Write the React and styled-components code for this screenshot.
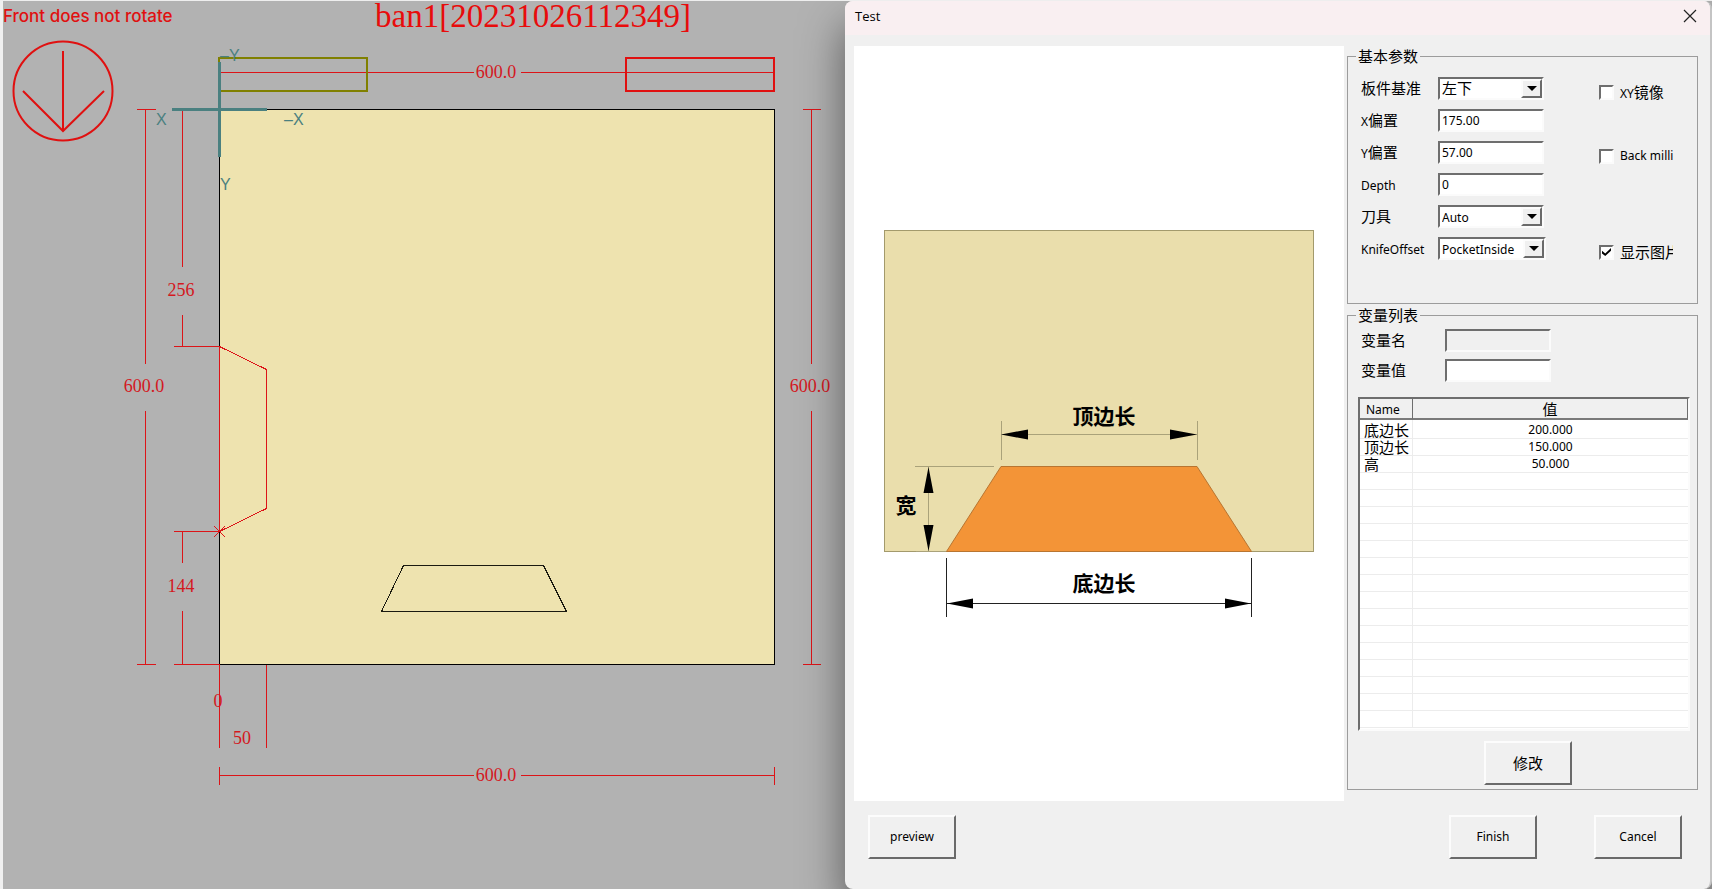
import React from "react";
import styled, { createGlobalStyle } from "styled-components";

const GlobalStyle = createGlobalStyle`
  *, *::before, *::after { box-sizing: border-box; }
  body {
    margin: 0;
    background: #b2b2b2;
    color: #000;
    font: 12px/16px "Noto Sans", "Noto Sans CJK SC", sans-serif;
  }
  button, input, select { font: inherit; color: inherit; }
`;

const Screen = styled.div`
  display: grid;
  grid-template-columns: minmax(0, 845fr) minmax(0, 867fr);
  min-height: 100vh;
  border-top: 1px solid #eeeeee;
  overflow: hidden;
`;

const Cjk = styled.span`
  font-family: "Noto Sans CJK SC", sans-serif;
  font-size: 15px;
  line-height: 20px;
`;

/* ---------- board drawing ---------- */

const Canvas = styled.main`
  border-left: 3px solid #f0f0f0;
  background: #b2b2b2;
`;

const BoardSvg = styled.svg`
  display: block;
  width: 100%;
  height: auto;
  fill: none;
  overflow: visible;
`;

const Lines = styled.g`
  stroke: ${(p) => p.$color || "#dc1418"};
  stroke-width: ${(p) => p.$weight || 1};
  shape-rendering: ${(p) => (p.$smooth ? "auto" : "crispEdges")};
`;

const DimText = styled.text`
  font: 18px "Liberation Serif", serif;
  fill: #d4181e;
`;

const BoardTitle = styled.text`
  font: 33px "Liberation Serif", serif;
  fill: #e80c0c;
`;

const Notice = styled.text`
  font: 500 17px Inter, sans-serif;
  fill: #e01010;
`;

const AxisText = styled.text`
  font: 16px "Liberation Sans", sans-serif;
  fill: #4a8080;
`;

function Board() {
  return (
    <BoardSvg viewBox="3 1 842 888" role="img" aria-label="Board drawing">
      <rect x="219.5" y="109.5" width="555" height="555" fill="#eee3af" stroke="#000" shapeRendering="crispEdges" />
      <Lines $color="#1a1a10">
        <path d="M403.5 565.5H543.5L566.5 611.5H381.5Z" />
      </Lines>

      <Lines>
        <path d="M219 72.5H474M521 72.5H774" />
        <path d="M137 109.5H156M145.5 109V364M145.5 411V664M137 664.5H156" />
        <path d="M182.5 110V267M182.5 315V346M174 346.5H219" />
        <path d="M174 531.5H219M182.5 531V563M182.5 611V664M174 664.5H219" />
        <path d="M219.5 664V748M266.5 665V748" />
        <path d="M219.5 767V785M219 775.5H474M521 775.5H774M774.5 767V785" />
        <path d="M803 109.5H821M811.5 109V364M811.5 411V664M803 664.5H821" />
        <path d="M219.5 346.5L266.5 369.5V508.5L219.5 531.5Z" />
        <path d="M214 526L225 537M225 526L214 537" />
      </Lines>

      <Lines $color="#808000" $weight={2}>
        <rect x="219" y="58" width="148" height="33" />
      </Lines>
      <Lines $color="#e01010" $weight={2}>
        <rect x="626" y="58" width="148" height="33" />
      </Lines>
      <Lines $color="#e01010" $weight={2} $smooth>
        <circle cx="63" cy="91" r="49.5" />
        <path d="M63 51V131M23 91L63 131L104 91" />
      </Lines>
      <Lines $color="#4a8080" $weight={3}>
        <path d="M172 109.5H267M219.5 62V157" />
      </Lines>

      <AxisText x="220" y="61">–Y</AxisText>
      <AxisText x="220" y="190">Y</AxisText>
      <AxisText x="156" y="125">X</AxisText>
      <AxisText x="284" y="125">–X</AxisText>

      <Notice x="3" y="22">Front does not rotate</Notice>
      <BoardTitle x="533" y="27" textAnchor="middle">ban1[20231026112349]</BoardTitle>
      <DimText x="496" y="78" textAnchor="middle">600.0</DimText>
      <DimText x="496" y="781" textAnchor="middle">600.0</DimText>
      <DimText x="144" y="392" textAnchor="middle">600.0</DimText>
      <DimText x="810" y="392" textAnchor="middle">600.0</DimText>
      <DimText x="181" y="296" textAnchor="middle">256</DimText>
      <DimText x="181" y="592" textAnchor="middle">144</DimText>
      <DimText x="218" y="707" textAnchor="middle">0</DimText>
      <DimText x="242" y="744" textAnchor="middle">50</DimText>
    </BoardSvg>
  );
}

/* ---------- dialog ---------- */

const Dialog = styled.section`
  display: flex;
  flex-direction: column;
  background: #f0f0f0;
  border-right: 2px solid #c4c4c4;
  border-radius: 8px;
  box-shadow: 0 24px 44px rgba(0, 0, 0, 0.5);
  overflow: hidden;
`;

const TitleBar = styled.header`
  display: flex;
  align-items: center;
  justify-content: space-between;
  height: 34px;
  padding: 0 10px;
  background: #f9eff1;
`;

const DialogTitle = styled.h1`
  margin: 0;
  padding-bottom: 4px;
  font: 13px/20px "Open Sans", sans-serif;
`;

const CloseButton = styled.button`
  display: flex;
  justify-content: center;
  align-items: center;
  width: 20px;
  height: 20px;
  margin: 0 0 4px;
  padding: 0;
  border: 0;
  background: none;
`;

const Body = styled.div`
  display: flex;
  flex: 1;
  gap: 3px;
  padding: 11px 12px 0 9px;
`;

const PreviewPane = styled.div`
  flex: 1;
  min-width: 0;
  background: #fff;
`;

const PreviewSvg = styled.svg`
  display: block;
  width: 100%;
  height: auto;
`;

const PreviewText = styled.text`
  font: bold 21px "Noto Sans CJK SC", sans-serif;
  text-anchor: middle;
`;

const Side = styled.div`
  display: flex;
  flex-direction: column;
  gap: 1px;
  width: 351px;
  padding-bottom: 11px;
`;

const Group = styled.fieldset`
  min-width: 0;
  margin: 0;
  padding: 0 7px 0 10px;
  border: 1px solid #9c9c9c;
`;

const GroupTitle = styled.legend`
  margin-left: -2px;
  padding: 0 2px;
  font: 15px/20px "Noto Sans CJK SC", sans-serif;
`;

const BasicGrid = styled.div`
  display: grid;
  grid-template-columns: 77px 1fr 74px;
  height: 237px;
  padding: 6px 17px 0 3px;
`;

const Column = styled.div`
  display: grid;
  grid-auto-rows: 32px;
  align-items: center;
  justify-items: start;
  padding-top: ${(p) => (p.$lowered ? "4px" : "0")};
`;

const FieldLabel = styled.label`
  padding-top: ${(p) => (p.$latin ? "3px" : "0")};
`;

const sunken = `
  border: 2px solid;
  border-color: #6e6e6e #fbfbfb #fbfbfb #6e6e6e;
`;

const raised = `
  border: 2px solid;
  border-color: #fcfcfc #6a6a6a #6a6a6a #fcfcfc;
`;

const TextField = styled.input`
  ${sunken}
  width: 106px;
  height: 23px;
  padding: 0 2px;
  border-radius: 0;
  background: #fff;
  &:disabled { background: #f0f0f0; }
`;

const SelectBox = styled.span`
  ${sunken}
  position: relative;
  display: block;
  width: ${(p) => (p.$wide ? "108px" : "106px")};
  height: 23px;
  background: #fff;
`;

const Select = styled.select`
  display: block;
  appearance: none;
  width: 100%;
  height: 19px;
  padding: ${(p) => (p.$cjk ? "0 20px 0 2px" : "2px 20px 0 2px")};
  border: 0;
  border-radius: 0;
  background: none;
  font-size: ${(p) => (p.$cjk ? "15px" : "12px")};
  line-height: 17px;
`;

const DropMark = styled.span`
  ${raised}
  position: absolute;
  top: 0;
  right: 0;
  display: flex;
  align-items: center;
  justify-content: center;
  width: 21px;
  height: 19px;
  background: #f0f0f0;
  pointer-events: none;
  &::after {
    content: "";
    border: 5px solid transparent;
    border-top-color: #000;
    border-bottom: 0;
  }
`;

const CheckLabel = styled.label`
  display: flex;
  align-items: center;
  width: 74px;
  overflow: hidden;
  white-space: nowrap;
`;

const CheckBox = styled.input`
  ${sunken}
  flex: none;
  appearance: none;
  display: grid;
  place-items: center;
  width: 15px;
  height: 15px;
  margin: 0 6px 0 0;
  background: #fff;
  &:checked::before {
    content: "";
    width: 9px;
    height: 8px;
    background: #000;
    clip-path: polygon(0 35%, 36% 68%, 100% 0, 100% 34%, 36% 100%, 0 68%);
  }
`;

const VariableRow = styled.div`
  display: grid;
  grid-template-columns: 84px 106px;
  align-items: center;
  height: 30px;
  padding-left: 3px;
`;

const TableFrame = styled.div`
  ${sunken}
  height: 334px;
  margin-top: 12px;
  background: #fff;
  overflow: hidden;
`;

const Table = styled.table`
  width: 100%;
  table-layout: fixed;
  border-collapse: separate;
  border-spacing: 0;
  tbody tr:first-child td { height: 19px; }
`;

const HeadCell = styled.th`
  width: ${(p) => (p.$narrow ? "53px" : "auto")};
  height: 21px;
  padding: ${(p) => (p.$narrow ? "3px 0 0 6px" : "0")};
  border-right: 1px solid #6e6e6e;
  border-bottom: 2px solid #7a7a7a;
  background: #f0f0f0;
  font-weight: normal;
  line-height: 16px;
  text-align: ${(p) => (p.$narrow ? "left" : "center")};
`;

const Cell = styled.td`
  height: 17px;
  padding: ${(p) => (p.$name ? "0 0 0 4px" : "0")};
  border-right: ${(p) => (p.$name ? "1px solid #ececec" : "0")};
  border-bottom: 1px solid #ececec;
  line-height: 16px;
  text-align: ${(p) => (p.$name ? "left" : "center")};
  vertical-align: bottom;
  white-space: nowrap;
`;

const TableText = styled(Cjk)`
  display: block;
  line-height: 16px;
`;

const Button = styled.button`
  ${raised}
  width: 88px;
  height: 44px;
  padding: 0;
  border-radius: 0;
  background: #f0f0f0;
`;

const ModifyRow = styled.div`
  display: flex;
  justify-content: center;
  padding: 10px 0 4px 8px;
`;

const Footer = styled.footer`
  display: flex;
  gap: 57px;
  padding: 14px 28px 30px 23px;
`;

const Spacer = styled.span`
  flex: 1;
`;

function PreviewDrawing() {
  return (
    <PreviewSvg viewBox="0 0 490 755" role="img" aria-label="Trapezoid dimensions">
      <rect x="30.5" y="184.5" width="429" height="321" fill="#eadeac" stroke="#a39a6c" />
      <path d="M147 420.5H343L397.5 505.5H92.5Z" fill="#f39437" stroke="#b87531" />
      <path
        d="M147.5 375V414M343.5 375V414M147 388.5H343M61 420.5H140M62 505.5H92M74.5 421V505"
        fill="none"
        stroke="#aaa27a"
      />
      <path d="M92.5 512V571M397.5 512V571M92 557.5H397" fill="none" stroke="#222" />
      <path
        d="M147 388.5L174 383.5V393.5ZM343 388.5L316 383.5V393.5ZM74.5 421L69.5 447H79.5ZM74.5 505L69.5 479H79.5ZM93 557.5L119 552.5V562.5ZM397 557.5L371 552.5V562.5Z"
        fill="#000"
      />
      <PreviewText x="250" y="378">顶边长</PreviewText>
      <PreviewText x="52" y="467">宽</PreviewText>
      <PreviewText x="250" y="545">底边长</PreviewText>
    </PreviewSvg>
  );
}

function SelectField({ id, value, wide, cjk }) {
  return (
    <SelectBox $wide={wide}>
      <Select id={id} $cjk={cjk} defaultValue={value}>
        <option>{value}</option>
      </Select>
      <DropMark />
    </SelectBox>
  );
}

const variables = [
  ["底边长", "200.000"],
  ["顶边长", "150.000"],
  ["高", "50.000"],
];
const emptyRows = Array.from({ length: 15 }, (_, i) => i);

export default function App() {
  return (
    <>
      <GlobalStyle />
      <Screen>
        <Canvas>
          <Board />
        </Canvas>
        <Dialog aria-labelledby="dialog-title">
          <TitleBar>
            <DialogTitle id="dialog-title">Test</DialogTitle>
            <CloseButton aria-label="Close">
              <svg width="14" height="14" viewBox="0 0 14 14" fill="none" stroke="#222" strokeWidth="1.2">
                <path d="M1 1L13 13M13 1L1 13" />
              </svg>
            </CloseButton>
          </TitleBar>
          <Body>
            <PreviewPane>
              <PreviewDrawing />
            </PreviewPane>
            <Side>
              <Group>
                <GroupTitle>基本参数</GroupTitle>
                <BasicGrid>
                  <Column>
                    <FieldLabel htmlFor="base"><Cjk>板件基准</Cjk></FieldLabel>
                    <FieldLabel htmlFor="x-offset">X<Cjk>偏置</Cjk></FieldLabel>
                    <FieldLabel htmlFor="y-offset">Y<Cjk>偏置</Cjk></FieldLabel>
                    <FieldLabel $latin htmlFor="depth">Depth</FieldLabel>
                    <FieldLabel htmlFor="tool"><Cjk>刀具</Cjk></FieldLabel>
                    <FieldLabel $latin htmlFor="knife">KnifeOffset</FieldLabel>
                  </Column>
                  <Column>
                    <SelectField id="base" value="左下" cjk />
                    <TextField id="x-offset" defaultValue="175.00" />
                    <TextField id="y-offset" defaultValue="57.00" />
                    <TextField id="depth" defaultValue="0" />
                    <SelectField id="tool" value="Auto" />
                    <SelectField id="knife" value="PocketInside" wide />
                  </Column>
                  <Column $lowered>
                    <CheckLabel>
                      <CheckBox type="checkbox" />
                      <span>XY<Cjk>镜像</Cjk></span>
                    </CheckLabel>
                    <span />
                    <CheckLabel>
                      <CheckBox type="checkbox" />
                      Back milli
                    </CheckLabel>
                    <span />
                    <span />
                    <CheckLabel>
                      <CheckBox type="checkbox" defaultChecked />
                      <Cjk>显示图片</Cjk>
                    </CheckLabel>
                  </Column>
                </BasicGrid>
              </Group>
              <Group>
                <GroupTitle>变量列表</GroupTitle>
                <VariableRow>
                  <label htmlFor="var-name"><Cjk>变量名</Cjk></label>
                  <TextField id="var-name" disabled />
                </VariableRow>
                <VariableRow>
                  <label htmlFor="var-value"><Cjk>变量值</Cjk></label>
                  <TextField id="var-value" />
                </VariableRow>
                <TableFrame>
                  <Table>
                    <thead>
                      <tr>
                        <HeadCell $narrow>Name</HeadCell>
                        <HeadCell><TableText>值</TableText></HeadCell>
                      </tr>
                    </thead>
                    <tbody>
                      {variables.map(([name, value]) => (
                        <tr key={name}>
                          <Cell $name><TableText>{name}</TableText></Cell>
                          <Cell>{value}</Cell>
                        </tr>
                      ))}
                      {emptyRows.map((i) => (
                        <tr key={i}>
                          <Cell $name />
                          <Cell />
                        </tr>
                      ))}
                    </tbody>
                  </Table>
                </TableFrame>
                <ModifyRow>
                  <Button><Cjk>修改</Cjk></Button>
                </ModifyRow>
              </Group>
            </Side>
          </Body>
          <Footer>
            <Button>preview</Button>
            <Spacer />
            <Button>Finish</Button>
            <Button>Cancel</Button>
          </Footer>
        </Dialog>
      </Screen>
    </>
  );
}
